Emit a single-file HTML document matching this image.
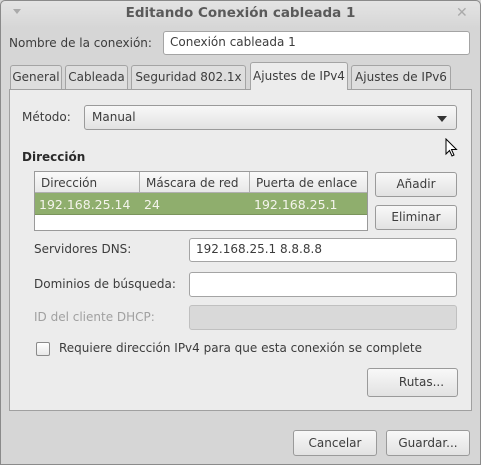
<!DOCTYPE html><html><head><meta charset="utf-8"><style>
*{box-sizing:border-box;margin:0;padding:0}
body{width:481px;height:465px;overflow:hidden;background:#d6d6d6;font:12px "DejaVu Sans","Liberation Sans",sans-serif;color:#3c3c3c;position:relative}
.a{position:absolute;white-space:nowrap}
.win{position:absolute;left:0;top:0;width:481px;height:465px;border:1px solid #8a8a8a;border-radius:5px 5px 0 0}
.title{position:absolute;left:1px;top:1px;width:479px;height:27px;background:linear-gradient(#e4e4e4,#d6d6d6);border-radius:5px 5px 0 0}
.entry{position:absolute;background:#fff;border:1px solid #a4a4a4;border-radius:3px;padding:0 0 0 6px;line-height:21px}
.btn{position:absolute;border:1px solid #9a9a9a;border-radius:3px;background:linear-gradient(#f8f8f8,#e2e2e2);text-align:center;color:#3c3c3c}
.tab{position:absolute;top:65px;height:24px;border:1px solid #a4a4a4;border-bottom:none;border-radius:3px 3px 0 0;background:#dedede;text-align:center;line-height:22px}
</style></head><body>
<div class="win"></div>
<div class="title"></div>
<div class="a" style="left:13px;top:9px;width:0;height:0;border-left:4px solid transparent;border-right:4px solid transparent;border-top:5px solid #aaa"></div>
<div class="a" style="left:0;width:481px;top:5px;text-align:center;font-weight:bold;font-size:13.5px;color:#5a5a5a">Editando Conexión cableada 1</div>
<div class="a" style="left:456px;top:5px;color:#aaa;font-size:14px">✕</div>
<div class="a" style="left:9px;top:36px">Nombre de la conexión:</div>
<div class="entry" style="left:163px;top:31px;width:307px;height:24px">Conexión cableada 1</div>
<div class="a" style="left:9px;top:89px;width:463px;height:322px;background:#ececec;border:1px solid #a0a0a0"></div>
<div class="tab" style="left:10px;width:52px">General</div>
<div class="tab" style="left:65px;width:63px">Cableada</div>
<div class="tab" style="left:131px;width:115px">Seguridad 802.1x</div>
<div class="tab" style="left:250px;top:62px;height:28px;width:98px;background:#ececec;line-height:26px">Ajustes de IPv4</div>
<div class="tab" style="left:351px;width:100px">Ajustes de IPv6</div>
<div class="a" style="left:22px;top:110px">Método:</div>
<div class="btn" style="left:84px;top:105px;width:373px;height:25px;text-align:left;padding-left:7px;line-height:23px">Manual<span style="position:absolute;right:9px;top:10px;border-left:5px solid transparent;border-right:5px solid transparent;border-top:6px solid #333"></span></div>
<div class="a" style="left:22px;top:150px;font-weight:bold;color:#2a2a2a">Dirección</div>
<div class="a" style="left:34px;top:171px;width:334px;height:60px;background:#fff;border:1px solid #9a9a9a"></div>
<div class="a" style="left:35px;top:172px;width:332px;height:21px;background:linear-gradient(#fafafa,#e8e8e8);border-bottom:1px solid #b0b0b0"></div>
<div class="a" style="left:139px;top:172px;height:21px;border-left:1px solid #b0b0b0"></div>
<div class="a" style="left:249px;top:172px;height:21px;border-left:1px solid #b0b0b0"></div>
<div class="a" style="left:41px;top:176px">Dirección</div>
<div class="a" style="left:146px;top:176px">Máscara de red</div>
<div class="a" style="left:256px;top:176px">Puerta de enlace</div>
<div class="a" style="left:35px;top:193px;width:332px;height:22px;background:#8fae6d;border-bottom:1px solid #7a945c"></div>
<div class="a" style="left:39px;top:197px;color:#f4f4ec;font-size:12.5px">192.168.25.14</div>
<div class="a" style="left:144px;top:197px;color:#f4f4ec;font-size:12.5px">24</div>
<div class="a" style="left:254px;top:197px;color:#f4f4ec;font-size:12.5px">192.168.25.1</div>
<div class="btn" style="left:375px;top:172px;width:82px;height:25px;line-height:23px">Añadir</div>
<div class="btn" style="left:375px;top:205px;width:82px;height:25px;line-height:23px">Eliminar</div>
<div class="a" style="left:34px;top:242px">Servidores DNS:</div>
<div class="entry" style="left:189px;top:238px;width:268px;height:24px">192.168.25.1 8.8.8.8</div>
<div class="a" style="left:34px;top:277px">Dominios de búsqueda:</div>
<div class="entry" style="left:189px;top:272px;width:268px;height:25px"></div>
<div class="a" style="left:34px;top:310px;color:#a0a0a0">ID del cliente DHCP:</div>
<div class="entry" style="left:189px;top:305px;width:268px;height:25px;background:#d9d9d9;border-color:#c0c0c0"></div>
<div class="a" style="left:36px;top:342px;width:14px;height:14px;border:1px solid #8a8a8a;border-radius:2px;background:linear-gradient(#fff,#e8e8e8)"></div>
<div class="a" style="left:59px;top:341px">Requiere dirección IPv4 para que esta conexión se complete</div>
<div class="btn" style="left:367px;top:368px;width:91px;height:29px;line-height:27px;padding-left:18px">Rutas...</div>
<div class="btn" style="left:293px;top:430px;width:84px;height:26px;line-height:24px">Cancelar</div>
<div class="btn" style="left:386px;top:430px;width:84px;height:26px;line-height:24px">Guardar...</div>
<svg class="a" style="left:445px;top:138px" width="14" height="20" viewBox="0 0 14 20"><path d="M1 1 L1 16 L4.5 12.5 L7 18 L9 17 L6.5 11.5 L11.5 11.5 Z" fill="#fff" stroke="#000" stroke-width="1"/></svg>
</body></html>
